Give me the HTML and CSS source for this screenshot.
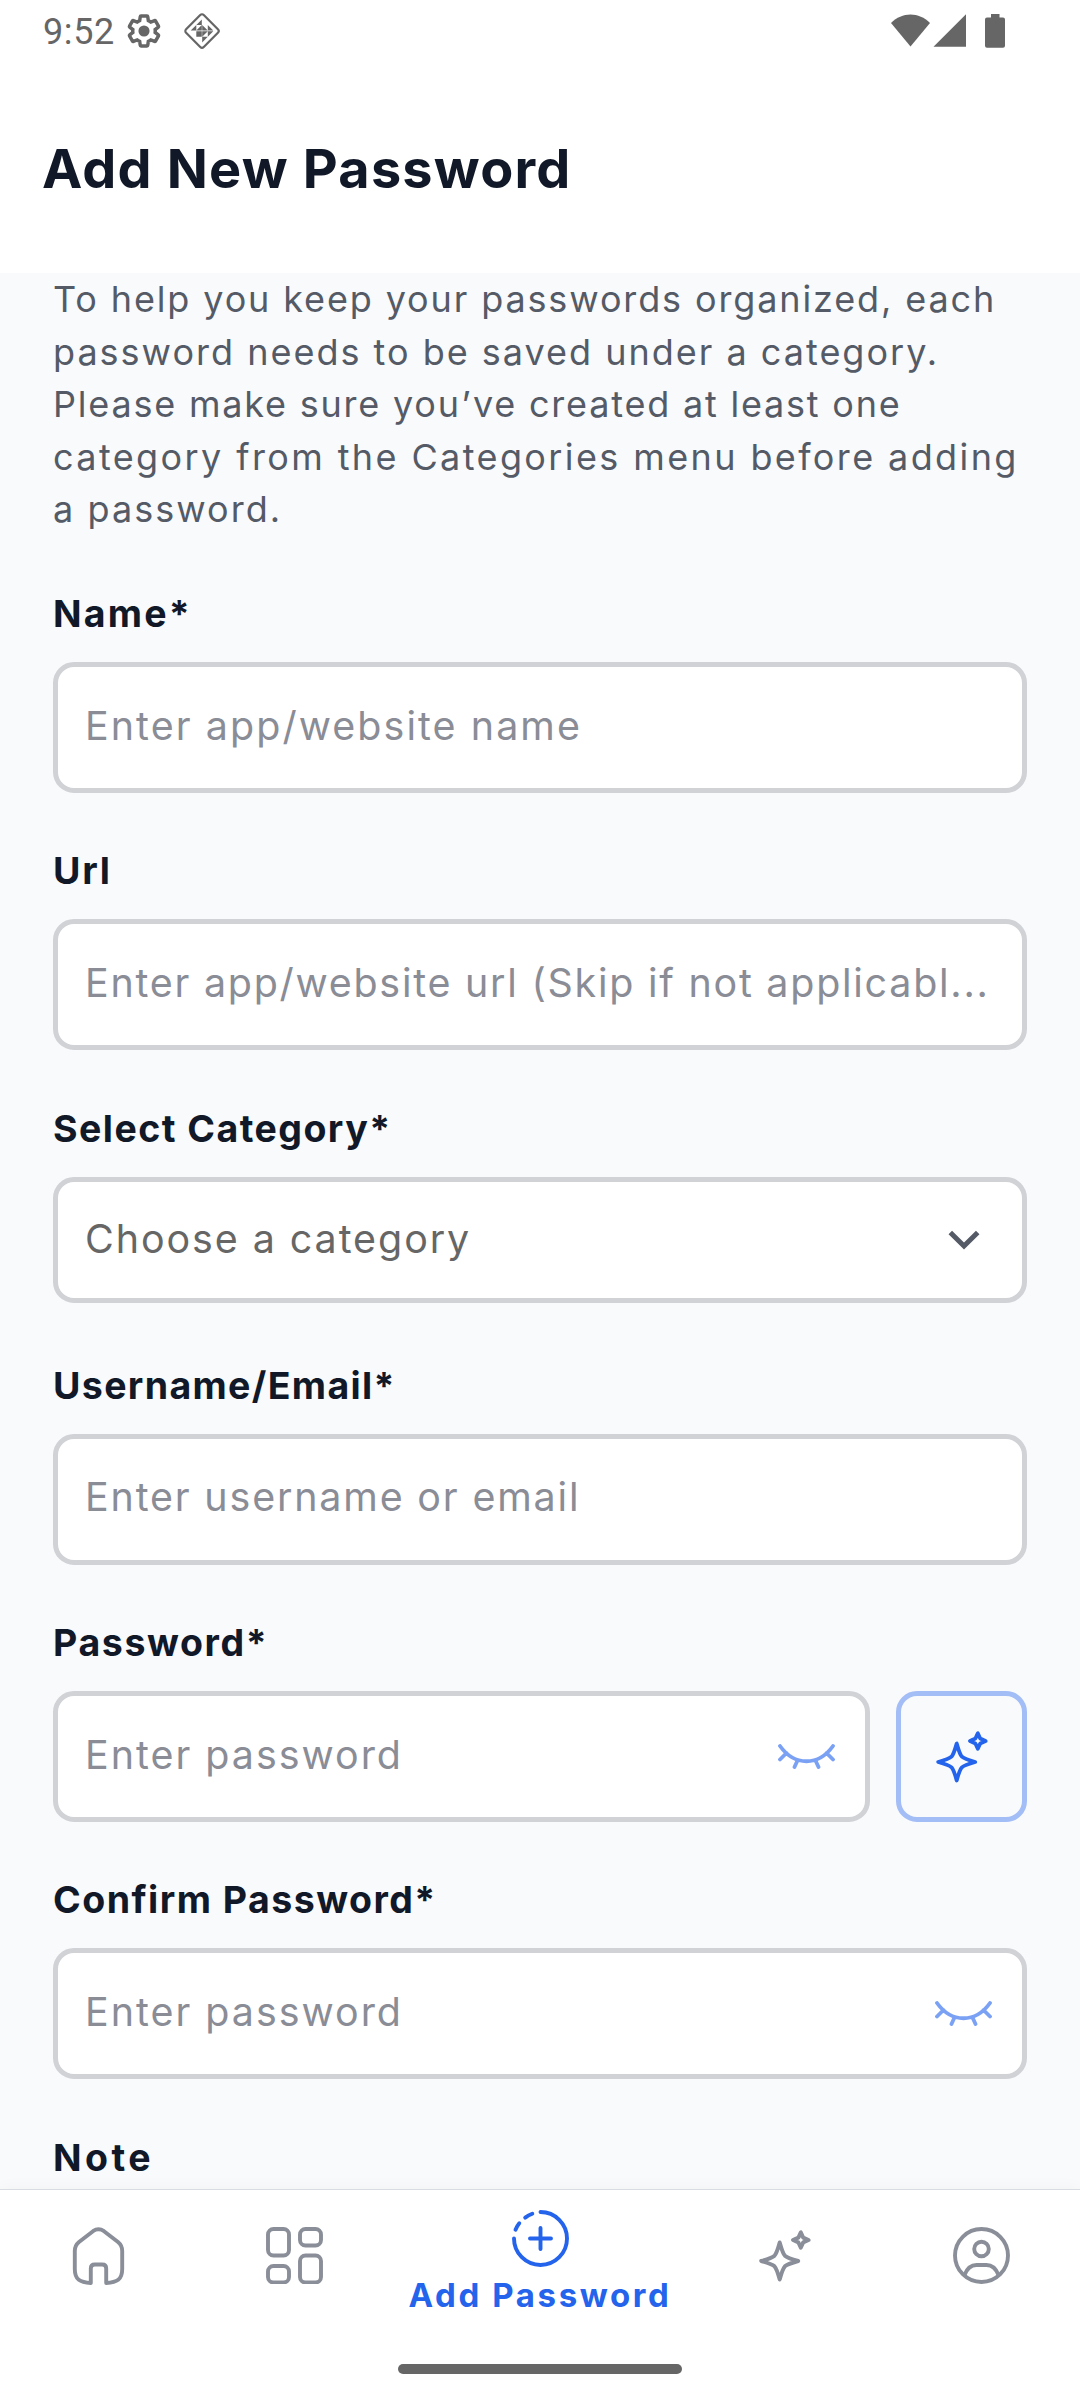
FILE: index.html
```
<!DOCTYPE html>
<html lang="en">
<head>
<meta charset="utf-8">
<title>Add New Password</title>
<link rel="stylesheet" href="styles.css">
</head>
<body>
<div class="screen">
  <div class="status-bar">
    <div class="status-left">
      <span class="clock">9:52</span>
      <svg class="icon-gear" width="36" height="36" viewBox="0 0 24 24">
        <path fill="none" stroke="#666" stroke-width="2.3" d="M19.43 12.98c.04-.32.07-.64.07-.98 0-.34-.03-.66-.07-.98l2.11-1.65c.19-.15.24-.42.12-.64l-2-3.46c-.09-.16-.26-.25-.44-.25-.06 0-.12.01-.17.03l-2.49 1c-.52-.4-1.08-.73-1.69-.98l-.38-2.65C14.46 2.18 14.25 2 14 2h-4c-.25 0-.46.18-.49.42l-.38 2.65c-.61.25-1.17.59-1.69.98l-2.49-1c-.06-.02-.12-.03-.18-.03-.17 0-.34.09-.43.25l-2 3.46c-.13.22-.07.49.12.64l2.11 1.65c-.04.32-.07.65-.07.98 0 .33.03.66.07.98l-2.11 1.65c-.19.15-.24.42-.12.64l2 3.46c.09.16.26.25.44.25.06 0 .12-.01.17-.03l2.49-1c.52.4 1.08.73 1.69.98l.38 2.65c.03.24.24.42.49.42h4c.25 0 .46-.18.49-.42l.38-2.65c.61-.25 1.17-.59 1.69-.98l2.49 1c.06.02.12.03.18.03.17 0 .34-.09.43-.25l2-3.46c.12-.22.07-.49-.12-.64z"/>
        <circle cx="12" cy="12" r="3.700" fill="#666"/>
      </svg>
      <svg width="38" height="38" viewBox="0 0 38 38">
        <rect x="6.500" y="6.500" width="25" height="25" rx="2.500" transform="rotate(45 19 19)" fill="none" stroke="#666" stroke-width="2.200"/>
        <path fill="#666" d="M18.800 7.500V13H13.300zM13.300 13V18.600H7.700zM18.800 13V18.600H13.300zM19.200 13L24.800 18.600H19.200zM24.800 13L30.300 18.600H24.800zM13.300 19.200H18.800V24.800zM19.200 19.200H24.800L19.200 24.800zM24.800 19.200H30.300L24.800 24.800zM19.200 24.800H24.800L19.200 30.500zM13.300 19.200V24.800H18.800z"/>
      </svg>
    </div>
    <svg width="114" height="34" viewBox="0 0 114 34" fill="#666">
      <path d="M0 9C11 -2.500 28 -2.500 39 9L19.500 32.500z"/>
      <path d="M75 0.300V32.700H42.500z"/>
      <path d="M100 0h8.500v3.500h3.500a2 2 0 0 1 2 2v26.200a2 2 0 0 1-2 2H96a2 2 0 0 1-2-2V5.500a2 2 0 0 1 2-2h4z"/>
    </svg>
  </div>

  <header class="header"><h1>Add New Password</h1></header>

  <main class="content">
    <p class="intro">
      <span class="line line-1">To help you keep your passwords organized, each</span>
      <span class="line line-2">password needs to be saved under a category.</span>
      <span class="line line-3">Please make sure you’ve created at least one</span>
      <span class="line line-4">category from the Categories menu before adding</span>
      <span class="line line-5">a password.</span>
    </p>

    <div class="group">
      <div class="label label-name">Name*</div>
      <div class="field"><span class="hint hint-name">Enter app/website name</span></div>
    </div>
    <div class="group">
      <div class="label label-url">Url</div>
      <div class="field"><span class="hint">Enter app/website url (Skip if not applicabl...</span></div>
    </div>
    <div class="group">
      <div class="label">Select Category*</div>
      <div class="field field-select">
        <span class="choice">Choose a category</span>
        <svg class="chevron" width="32" height="20" viewBox="0 0 32 20"><path d="M2.300 2.500L16 16L29.700 2.500" fill="none" stroke="#555b66" stroke-width="5"/></svg>
      </div>
    </div>
    <div class="group">
      <div class="label label-user">Username/Email*</div>
      <div class="field"><span class="hint hint-user">Enter username or email</span></div>
    </div>
    <div class="group">
      <div class="label label-pass">Password*</div>
      <div class="field-row">
        <div class="field">
          <span class="hint hint-pass">Enter password</span>
          <svg width="57" height="25" viewBox="0 0 57 25"><path class="eye" d="M2 2C16.500 22.300 40.500 22.300 55 2M8.500 9L2 15.500M48.500 9L55 15.500M19.500 16.500L16.500 23M37.500 16.500L40.500 23"/></svg>
        </div>
        <div class="generate">
          <svg width="52" height="52" viewBox="0 0 52 52"><path class="sparkle" d="M20.700 12.500C18.700 19.600 17.700 23.400 15.500 25.700C13.100 27.900 9.300 29 2.200 31C9.300 33 13.100 34.100 15.500 36.300C17.700 38.600 18.700 42.400 20.700 49.500C22.700 42.400 23.700 38.600 25.900 36.300C28.300 34.100 32.100 33 39.200 31C32.100 29 28.300 27.900 25.900 25.700C23.700 23.400 22.700 19.600 20.700 12.500zM41.800 2.200L39.400 7.600L34 10L39.400 12.400L41.800 17.800L44.200 12.400L49.600 10L44.200 7.600z"/></svg>
        </div>
      </div>
    </div>
    <div class="group">
      <div class="label">Confirm Password*</div>
      <div class="field">
        <span class="hint hint-pass">Enter password</span>
        <svg width="57" height="25" viewBox="0 0 57 25"><path class="eye" d="M2 2C16.500 22.300 40.500 22.300 55 2M8.500 9L2 15.500M48.500 9L55 15.500M19.500 16.500L16.500 23M37.500 16.500L40.500 23"/></svg>
      </div>
    </div>
    <div class="label label-note">Note</div>
  </main>

  <nav class="nav">
    <div class="tabs">
      <div class="tab">
        <svg width="57" height="58" viewBox="0 0 57 58"><path d="M20.800 56V41.500Q20.800 37.500 24.800 37.500H32.200Q36.200 37.500 36.200 41.500V56C47 55.300 52.200 52.800 52.200 42V24Q52.200 18.500 48 15L34 4.200Q28.500 0.500 23 4.200L9 15Q4.800 18.500 4.800 24V42C4.800 52.800 10 55.300 20.800 56z"/></svg>
      </div>
      <div class="tab">
        <svg width="57" height="57" viewBox="0 0 57 57"><rect x="2" y="2" width="21" height="26.500" rx="5.500"/><rect x="34" y="2" width="21" height="16.500" rx="5.500"/><rect x="2" y="39" width="21" height="16.500" rx="5.500"/><rect x="34" y="28.500" width="21" height="27" rx="5.500"/></svg>
      </div>
      <div class="tab tab-active">
        <svg width="57" height="57" viewBox="0 0 57 57"><path d="M28.500 2A26.500 26.500 0 1 1 2 28.500M3.500 19.800Q5 16 7.300 13.300M13.200 7.600Q16.500 5.200 20.300 3.700M28.500 18V39M18 28.500H39"/></svg>
        <span class="tab-label">Add Password</span>
      </div>
      <div class="tab">
        <svg width="52" height="52" viewBox="0 0 52 52"><path d="M20.700 12.500C18.700 19.600 17.700 23.400 15.500 25.700C13.100 27.900 9.300 29 2.200 31C9.300 33 13.100 34.100 15.500 36.300C17.700 38.600 18.700 42.400 20.700 49.500C22.700 42.400 23.700 38.600 25.900 36.300C28.300 34.100 32.100 33 39.200 31C32.100 29 28.300 27.900 25.900 25.700C23.700 23.400 22.700 19.600 20.700 12.500zM41.800 2.200L39.400 7.600L34 10L39.400 12.400L41.800 17.800L44.200 12.400L49.600 10L44.200 7.600z"/></svg>
      </div>
      <div class="tab">
        <svg width="57" height="57" viewBox="0 0 57 57"><circle cx="28.500" cy="28.500" r="26.500"/><circle cx="28.500" cy="22" r="7.300"/><path d="M11.500 48C14 41.500 17.500 38 23.500 38H33.500C39.500 38 43 41.500 45.500 48"/></svg>
      </div>
    </div>
    <div class="home-indicator"></div>
  </nav>
</div>
</body>
</html>
```
FILE: styles.css
```
* { box-sizing: border-box; }

body {
  margin: 0;
  background: #fff;
  font-family: Inter, "Liberation Sans", sans-serif;
}

.screen {
  width: 1080px;
  height: 2400px;
  display: flex;
  flex-direction: column;
  overflow: hidden;
}

svg { display: block; flex: none; }

.status-bar {
  flex: none;
  height: 62px;
  padding: 0 75px 0 43px;
  display: flex;
  align-items: center;
  justify-content: space-between;
}

.status-left { display: flex; align-items: center; }

.clock {
  width: 83px;
  padding-top: 1px;
  font: 400 36px/44px Roboto, sans-serif;
  letter-spacing: .6px;
  color: #666;
}

.icon-gear { margin-right: 21px; }

.header {
  flex: none;
  height: 211px;
  padding: 2px 42px 0;
  display: flex;
  align-items: center;
}

h1 {
  margin: 0;
  font-size: 54px;
  line-height: 64px;
  font-weight: 700;
  letter-spacing: 1.200px;
  color: #111827;
}

.content {
  flex: 1;
  min-height: 0;
  padding: 0 53px;
  background: #f9fafc;
  overflow: hidden;
}

.intro {
  margin: 0 0 54.700px;
  font-size: 36px;
  line-height: 52.500px;
  color: #555b66;
}

.line { display: block; white-space: nowrap; }
.line-1 { letter-spacing: 1.870px; }
.line-2 { letter-spacing: 2px; }
.line-3 { letter-spacing: 1.790px; }
.line-4 { letter-spacing: 2.390px; }
.line-5 { letter-spacing: 2.050px; }

.group { height: 257.250px; }

.label {
  margin-bottom: 24px;
  font-size: 37.500px;
  line-height: 48px;
  font-weight: 700;
  letter-spacing: 1.450px;
  color: #111827;
}
.label-name { letter-spacing: 2.200px; }
.label-url { letter-spacing: 1.700px; }
.label-user { letter-spacing: 1.350px; }
.label-pass { letter-spacing: 1.600px; }
.label-note { letter-spacing: 3.400px; }

.field {
  flex: 1;
  height: 131px;
  padding: 0 25px 0 27px;
  display: flex;
  align-items: center;
  justify-content: space-between;
  background: #fff;
  border: 5px solid #d0d2d6;
  border-radius: 21px;
}
.field svg { margin-right: 5px; }
.field-select { height: 126px; }
.field .chevron { margin-right: 17px; }

.hint {
  padding-bottom: 4px;
  font-size: 39.400px;
  line-height: 48px;
  letter-spacing: 1.760px;
  color: #8a8c96;
  white-space: nowrap;
}
.hint-name { letter-spacing: 2.080px; }
.hint-user { letter-spacing: 1.840px; }
.hint-pass { letter-spacing: 2px; }

.choice {
  padding-bottom: 1px;
  font-size: 39.400px;
  line-height: 48px;
  letter-spacing: 1.940px;
  color: #666;
}

.field-row { display: flex; gap: 26px; }

.generate {
  width: 131px;
  height: 131px;
  display: flex;
  align-items: center;
  justify-content: center;
  border: 5px solid #a3bdf7;
  border-radius: 21px;
}

.eye, .sparkle {
  fill: none;
  stroke-width: 3.800;
  stroke-linecap: round;
  stroke-linejoin: round;
}
.eye { stroke: #7ba1f5; }
.sparkle { stroke: #2463eb; }

.nav {
  flex: none;
  height: 211px;
  background: #fff;
  border-top: 1px solid #d9dce0;
  box-shadow: 0 -2px 14px rgba(0, 0, 0, .03);
}

.tabs {
  height: 132px;
  display: grid;
  grid-template-columns: 196.500px 196.500px 1fr 196.500px 196.500px;
}

.tab {
  padding-bottom: 1px;
  display: flex;
  flex-direction: column;
  align-items: center;
  justify-content: center;
  gap: 8px;
}

.tab svg {
  fill: none;
  stroke: #8a8e98;
  stroke-width: 3.900;
  stroke-linecap: round;
  stroke-linejoin: round;
}

.tab-active { justify-content: flex-start; padding-top: 20px; }
.tab-active svg { stroke: #2463eb; }

.tab-label {
  font-size: 33px;
  line-height: 40px;
  font-weight: 700;
  letter-spacing: 2.600px;
  color: #2463eb;
  white-space: nowrap;
}

.home-indicator {
  width: 284px;
  height: 10px;
  margin: 42px auto 0;
  border-radius: 5px;
  background: #666;
}
```
